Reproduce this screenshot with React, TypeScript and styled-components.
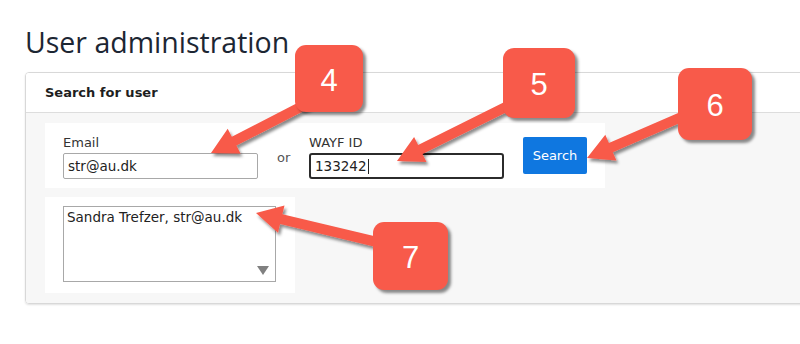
import React from 'react';
import styled, { createGlobalStyle } from 'styled-components';

const GlobalStyle = createGlobalStyle`
  body {
    margin: 0;
    background: #ffffff;
    font-family: "DejaVu Sans", Verdana, sans-serif;
  }
`;

type Pt = [number, number];

// callout boxes with their arrows
const callouts = [
  { n: 4, x: 295, y: 45, w: 68, h: 67, from: [318, 98] as Pt, to: [211, 153] as Pt },
  { n: 5, x: 503, y: 48, w: 72, h: 70, from: [530, 95] as Pt, to: [397, 161] as Pt },
  { n: 6, x: 678, y: 68, w: 74, h: 72, from: [702, 108] as Pt, to: [587, 158] as Pt },
  { n: 7, x: 373, y: 222, w: 75, h: 68, from: [402, 248] as Pt, to: [256, 213] as Pt },
];

const arrowPoints = (from: Pt, to: Pt) => {
  const dx = to[0] - from[0];
  const dy = to[1] - from[1];
  const len = Math.sqrt(dx * dx + dy * dy);
  const ux = dx / len;
  const uy = dy / len;
  const px = -uy;
  const py = ux;
  const shaft = 5;
  const head = 14;
  const headLen = 26;
  const bx = to[0] - ux * headLen;
  const by = to[1] - uy * headLen;
  const pts: Pt[] = [
    [from[0] + px * shaft, from[1] + py * shaft],
    [bx + px * shaft, by + py * shaft],
    [bx + px * head, by + py * head],
    to,
    [bx - px * head, by - py * head],
    [bx - px * shaft, by - py * shaft],
    [from[0] - px * shaft, from[1] - py * shaft],
  ];
  return pts.map((p) => `${p[0].toFixed(1)},${p[1].toFixed(1)}`).join(' ');
};

export default function App() {
  return (
    <Page>
      <GlobalStyle />
      <Title>User administration</Title>
      <Panel>
        <PanelHeader>Search for user</PanelHeader>
        <PanelBody>
          <SearchBox>
            <Field>
              <Label>Email</Label>
              <Input $width={195} defaultValue="str@au.dk" />
            </Field>
            <Or>or</Or>
            <Field>
              <Label>WAYF ID</Label>
              <FocusWrap>
                <Input $width={195} $focused defaultValue="133242" />
                <Caret />
              </FocusWrap>
            </Field>
            <SearchButton>Search</SearchButton>
          </SearchBox>
          <ResultBox>
            <ListBox>
              <ListItem>Sandra Trefzer, str@au.dk</ListItem>
              <ScrollArrow />
            </ListBox>
          </ResultBox>
        </PanelBody>
      </Panel>

      <ArrowLayer width={800} height={344}>
        <defs>
          <filter id="shadow" x="-20%" y="-20%" width="140%" height="140%">
            <feDropShadow dx="2" dy="3" stdDeviation="1.5" floodColor="#000" floodOpacity="0.45" />
          </filter>
        </defs>
        {callouts.map((c) => (
          <polygon key={c.n} points={arrowPoints(c.from, c.to)} fill="#f85a4a" filter="url(#shadow)" />
        ))}
      </ArrowLayer>
      {callouts.map((c) => (
        <Callout key={c.n} $x={c.x} $y={c.y} $w={c.w} $h={c.h}>
          {c.n}
        </Callout>
      ))}
    </Page>
  );
}

const Page = styled.div`
  position: relative;
  width: 800px;
  height: 344px;
  overflow: hidden;
  background: #ffffff;
`;

const Title = styled.h1`
  margin: 0;
  padding: 28px 0 0 25px;
  height: 44px;
  box-sizing: border-box;
  font-family: "Open Sans", "Noto Sans", sans-serif;
  font-weight: 400;
  font-size: 28.5px;
  line-height: 28px;
  color: #1c2633;
`;

const Panel = styled.div`
  margin: 28px 0 0 25px;
  width: 790px;
  border: 1px solid #d8d8d8;
  border-radius: 4px;
  box-shadow: 0 1px 2px rgba(0, 0, 0, 0.12);
  overflow: hidden;
`;

const PanelHeader = styled.div`
  height: 39px;
  line-height: 39px;
  padding-left: 19px;
  background: #ffffff;
  border-bottom: 1px solid #dddddd;
  font-size: 13px;
  font-weight: bold;
  color: #1e1e1e;
`;

const PanelBody = styled.div`
  background: #f7f7f7;
  padding: 10px 0 10px 19px;
  display: flex;
  flex-direction: column;
  gap: 9px;
`;

const SearchBox = styled.div`
  width: 560px;
  height: 65px;
  box-sizing: border-box;
  background: #ffffff;
  padding: 12px 18px 0 18px;
  display: flex;
  align-items: flex-start;
  gap: 19px;
`;

const Field = styled.div`
  display: flex;
  flex-direction: column;
  gap: 2px;
`;

const Label = styled.label`
  font-size: 13px;
  line-height: 16px;
  color: #333333;
`;

const FocusWrap = styled.div`
  position: relative;
`;

const Input = styled.input<{ $width: number; $focused?: boolean }>`
  display: block;
  width: ${(p) => p.$width}px;
  height: 26px;
  box-sizing: border-box;
  margin: 0;
  padding: 0 4px;
  font-family: "DejaVu Sans", Verdana, sans-serif;
  font-size: 13.5px;
  color: #222222;
  background: #ffffff;
  outline: none;
  border: ${(p) => (p.$focused ? '2px solid #2b2b2b' : '1px solid #a8a8a8')};
  border-radius: ${(p) => (p.$focused ? '3px' : '2px')};
`;

const Caret = styled.span`
  position: absolute;
  left: 59px;
  top: 6px;
  width: 1px;
  height: 15px;
  background: #222222;
`;

const Or = styled.span`
  margin-top: 15px;
  width: 13px;
  font-size: 13px;
  line-height: 16px;
  color: #555555;
`;

const SearchButton = styled.button`
  margin-top: 2px;
  width: 64px;
  height: 37px;
  padding: 0;
  border: none;
  border-radius: 2px;
  background: #0f77e0;
  color: #ffffff;
  font-family: "DejaVu Sans", Verdana, sans-serif;
  font-size: 13px;
`;

const ResultBox = styled.div`
  width: 250px;
  height: 96px;
  box-sizing: border-box;
  background: #ffffff;
  padding: 9px 0 0 18px;
`;

const ListBox = styled.div`
  position: relative;
  width: 213px;
  height: 76px;
  box-sizing: border-box;
  border: 1px solid #a8a8a8;
  background: #ffffff;
`;

const ListItem = styled.div`
  padding: 2px 3px;
  font-size: 13.5px;
  line-height: 17px;
  color: #222222;
`;

const ScrollArrow = styled.span`
  position: absolute;
  right: 6px;
  bottom: 6px;
  width: 0;
  height: 0;
  border-left: 6px solid transparent;
  border-right: 6px solid transparent;
  border-top: 9px solid #808080;
`;

const ArrowLayer = styled.svg`
  position: absolute;
  left: 0;
  top: 0;
  pointer-events: none;
`;

const Callout = styled.div<{ $x: number; $y: number; $w: number; $h: number }>`
  position: absolute;
  left: ${(p) => p.$x}px;
  top: ${(p) => p.$y}px;
  width: ${(p) => p.$w}px;
  height: ${(p) => p.$h}px;
  display: flex;
  align-items: center;
  justify-content: center;
  background: #f85a4a;
  border-radius: 11px;
  box-shadow: 3px 3px 3px rgba(0, 0, 0, 0.45);
  color: #ffffff;
  font-family: "Liberation Sans", Arial, sans-serif;
  font-size: 31px;
  padding-top: 4px;
  box-sizing: border-box;
`;
